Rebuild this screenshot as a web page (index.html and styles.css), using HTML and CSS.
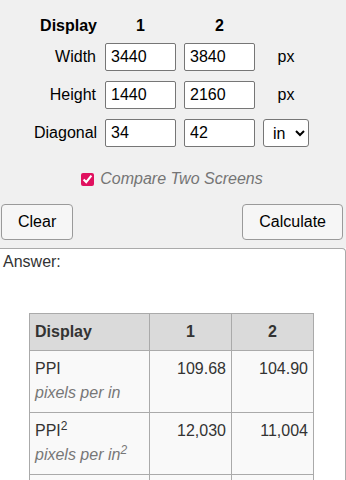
FILE: index.html
```html
<!DOCTYPE html>
<html lang="en">
<head>
    <meta charset="UTF-8">
    <meta name="viewport" content="width=device-width, initial-scale=1.0">
    <title>PPI Calculator</title>
    <link rel="stylesheet" href="styles.css">
</head>
<body>
    <!-- input form -->
    <div class="form">
        <div class="grid">
            <div class="head label">Display</div>
            <div class="head">1</div>
            <div class="head">2</div>
            <div></div>

            <label class="label">Width</label>
            <input class="field" type="text" value="3440">
            <input class="field" type="text" value="3840">
            <span class="unit">px</span>

            <label class="label">Height</label>
            <input class="field" type="text" value="1440">
            <input class="field" type="text" value="2160">
            <span class="unit">px</span>

            <label class="label">Diagonal</label>
            <input class="field" type="text" value="34">
            <input class="field" type="text" value="42">
            <select class="units">
                <option selected>in</option>
                <option>cm</option>
            </select>
        </div>

        <label class="compare">
            <input type="checkbox" checked>
            <span>Compare Two Screens</span>
        </label>

        <div class="buttons">
            <button class="btn">Clear</button>
            <button class="btn">Calculate</button>
        </div>
    </div>

    <!-- answer -->
    <div class="answer">
        <div class="answer-label">Answer:</div>
        <table class="result">
            <thead>
                <tr>
                    <th>Display</th>
                    <th class="num-head">1</th>
                    <th class="num-head">2</th>
                </tr>
            </thead>
            <tbody>
                <tr>
                    <td>PPI<div class="note">pixels per in</div></td>
                    <td class="num">109.68</td>
                    <td class="num">104.90</td>
                </tr>
                <tr>
                    <td>PPI<sup>2</sup><div class="note">pixels per in<sup>2</sup></div></td>
                    <td class="num">12,030</td>
                    <td class="num">11,004</td>
                </tr>
                <tr>
                    <td>Width<div class="note">in</div></td>
                    <td class="num">31.36</td>
                    <td class="num">36.61</td>
                </tr>
            </tbody>
        </table>
    </div>
</body>
</html>
```

FILE: styles.css
```css
* {
    margin: 0;
    padding: 0;
    box-sizing: border-box;
}

body {
    font-family: 'Liberation Sans', Arial, sans-serif;
    font-size: 16px;
    color: #000;
    background: #fff;
}

/* form */
.form {
    background: #f0f0f0;
    padding: 17px 3px 8px 1px;
}

.grid {
    display: grid;
    grid-template-columns: 63px 71px 71px 46px;
    grid-template-rows: 16px 28px 28px 28px;
    column-gap: 8px;
    row-gap: 10px;
    align-items: center;
    margin-left: 33px;
}

.grid .label {
    text-align: right;
    margin-right: 1px;
}

.head {
    font-weight: bold;
    text-align: center;
    align-self: start;
    line-height: 18px;
}

.grid .head.label {
    text-align: right;
    margin-right: 0;
}

.field {
    width: 71px;
    height: 28px;
    padding: 3px 5px;
    border: 1px solid #767676;
    border-radius: 2px;
    font-family: inherit;
    font-size: 16px;
    color: #000;
    background: #fff;
}

.unit {
    text-align: center;
}

.units {
    width: 46px;
    height: 28px;
    font-family: inherit;
    font-size: 16px;
    color: #000;
    background: #fff;
    border: 1px solid #767676;
    border-radius: 3px;
    padding: 0 2px 0 5px;
}

.compare {
    display: flex;
    justify-content: center;
    align-items: center;
    gap: 6px;
    margin-top: 23px;
    font-style: italic;
    color: #757575;
}

.compare input {
    width: 13px;
    height: 13px;
    accent-color: #e0115f;
}

.buttons {
    display: flex;
    justify-content: space-between;
    margin-top: 16px;
}

.btn {
    height: 36px;
    padding: 0 16px;
    font-family: inherit;
    font-size: 16px;
    color: #000;
    background: #f6f6f6;
    border: 1px solid #9a9a9a;
    border-radius: 4px;
}

/* answer */
.answer {
    border-top: 1px solid #aaa;
    border-right: 1px solid #aaa;
    border-top-right-radius: 4px;
    background: #fff;
    min-height: 240px;
}

.answer-label {
    padding: 4px 3px 0;
    color: #333;
}

.result {
    margin: 42px 0 0 29px;
    border-collapse: collapse;
    color: #333;
}

.result th,
.result td {
    border: 1px solid #aaa;
    padding: 6px 5px 7px;
    line-height: 24px;
    vertical-align: top;
}

.result th {
    background: #dadada;
    text-align: left;
    padding-bottom: 6px;
}

.result th:first-child,
.result td:first-child {
    width: 120px;
}

.result .num-head {
    width: 82px;
    text-align: center;
}

.result td {
    background: #f9f9f9;
}

.result .num {
    text-align: right;
}

.note {
    font-style: italic;
    color: #777;
}

sup {
    font-size: 12px;
    line-height: 0;
    vertical-align: 6px;
}
```
